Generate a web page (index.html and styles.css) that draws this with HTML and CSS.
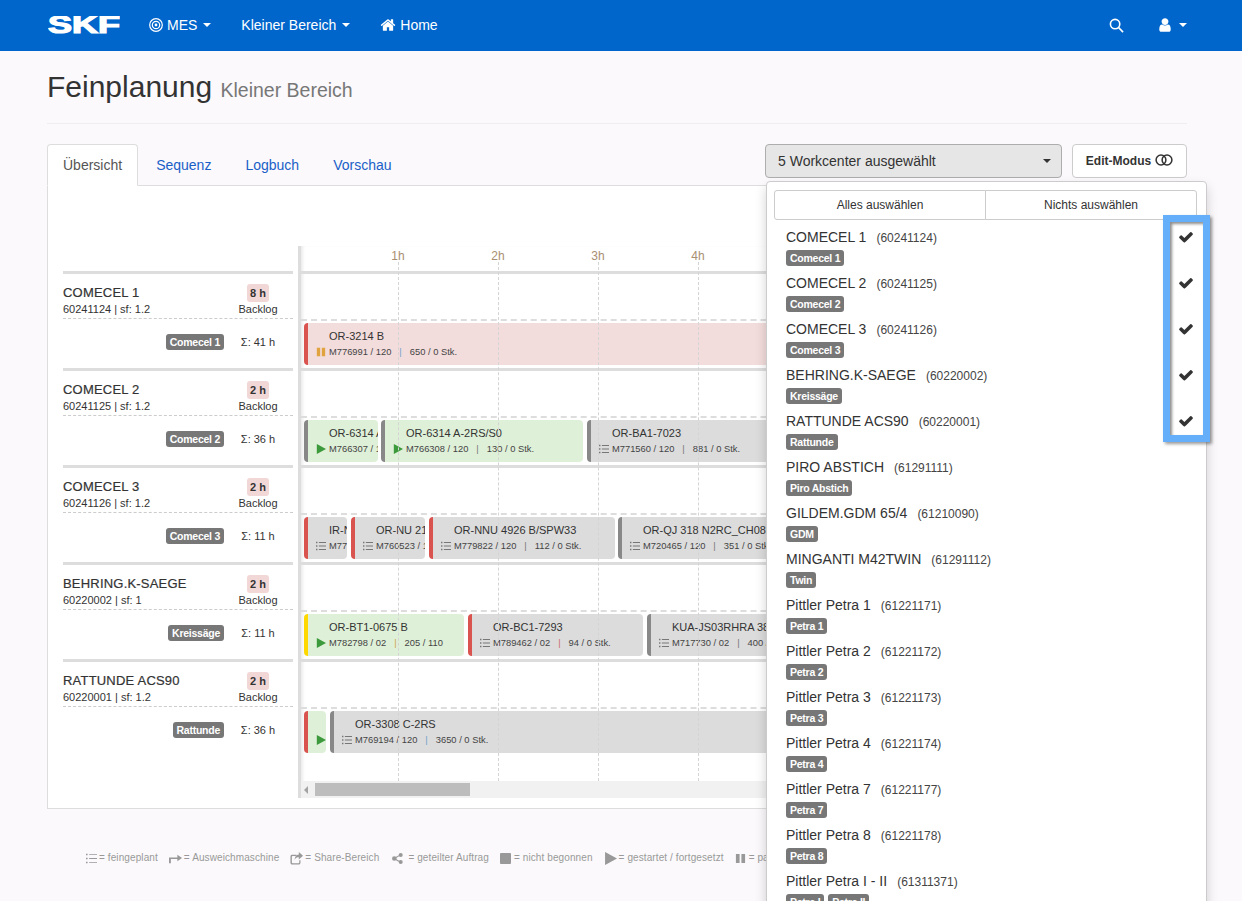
FILE: index.html
```html
<!DOCTYPE html>
<html lang="de">
<head>
    <meta charset="UTF-8">
    <meta name="viewport" content="width=device-width, initial-scale=1.0">
    <title>Feinplanung</title>
    <link rel="stylesheet" href="styles.css">
</head>
<body>
    <svg class="sprites" width="0" height="0">
        <symbol id="i-check" viewBox="0 0 1792 1792"><path d="M1671 566q0 40-28 68l-724 724-136 136q-28 28-68 28t-68-28l-136-136-362-362q-28-28-28-68t28-68l136-136q28-28 68-28t68 28l294 295 656-657q28-28 68-28t68 28l136 136q28 28 28 68z"/></symbol>
        <symbol id="i-home" viewBox="0 0 1792 1792"><path d="M1472 992v480q0 26-19 45t-45 19h-384v-384h-256v384h-384q-26 0-45-19t-19-45v-480q0-1 .5-3t.5-3l575-474 575 474q1 2 1 6zm223-69l-62 74q-8 9-21 11h-3q-13 0-21-7l-692-577-692 577q-12 8-24 7-13-2-21-11l-62-74q-8-10-7-23.5t11-21.5l719-599q32-26 76-26t76 26l244 204v-195q0-14 9-23t23-9h192q14 0 23 9t9 23v408l219 182q10 8 11 21.5t-7 23.5z"/></symbol>
        <symbol id="i-user" viewBox="0 0 1792 1792"><path d="M1536 1399q0 109-62.500 187t-150.500 78h-854q-88 0-150.500-78t-62.500-187q0-85 8.500-160.500t31.500-152 58.500-131 94-89 134.500-34.500q131 128 313 128t313-128q76 0 134.500 34.500t94 89 58.500 131 31.500 152 8.500 160.500zm-256-887q0 159-112.500 271.500t-271.500 112.500-271.500-112.500-112.500-271.500 112.500-271.500 271.500-112.500 271.500 112.500 112.500 271.500z"/></symbol>
        <symbol id="i-list" viewBox="0 0 14 12"><path d="M0 0h2v2H0zM0 5h2v2H0zM0 10h2v2H0zM4 .5h10v1.200H4zM4 5.400h10v1.200H4zM4 10.300h10v1.200H4z"/></symbol>
        <symbol id="i-play" viewBox="0 0 12 12"><path d="M1 0l11 6-11 6z"/></symbol>
        <symbol id="i-pause" viewBox="0 0 12 12"><path d="M1 1h4v10H1zM7 1h4v10H7z"/></symbol>
        <symbol id="i-stop" viewBox="0 0 12 12"><path d="M1 0h10a1 1 0 0 1 1 1v10a1 1 0 0 1-1 1H1a1 1 0 0 1-1-1V1a1 1 0 0 1 1-1z"/></symbol>
        <symbol id="i-arrow" viewBox="0 0 14 12"><path d="M0 5h9V2l5 3.500L9 9V6.500H2V11H0z"/></symbol>
        <symbol id="i-share" viewBox="0 0 14 14"><path d="M2 3h5v1.300H2.800a.8.8 0 0 0-.8.8v6.100c0 .5.300.8.800.8h6.400c.5 0 .8-.3.8-.8V9h1.300v2.500c0 1.200-.9 2-2 2H2.500c-1.200 0-2-.8-2-2v-6.500C.5 3.900 1 3 2 3z"/><path d="M9.500 0L14 4 9.500 8V5.700C7.500 5.700 6 6.300 5 8.500 5 5.500 6.500 3 9.500 2.700z"/></symbol>
        <symbol id="i-nodes" viewBox="0 0 12 12"><circle cx="2.500" cy="6" r="2.500"/><circle cx="9.500" cy="2.200" r="2.200"/><circle cx="9.500" cy="9.800" r="2.200"/><path d="M2 5.500l7-4 .6 1-7 4zM2.600 5.500l7 4-.6 1-7-4z"/></symbol>
    </svg>

    <nav class="navbar">
        <svg class="logo" width="72" height="18" viewBox="0 0 72 18"><text x="0" y="17" textLength="72" lengthAdjust="spacingAndGlyphs">SKF</text></svg>
        <a class="nav-link">
            <svg class="target" width="14" height="14" viewBox="0 0 14 14"><circle cx="7" cy="7" r="6.300"/><circle cx="7" cy="7" r="3.700"/><circle cx="7" cy="7" r="1.400"/></svg>
            <span>MES</span>
            <span class="caret"></span>
        </a>
        <a class="nav-link"><span>Kleiner Bereich</span> <span class="caret"></span></a>
        <a class="nav-link"><svg class="ico-16"><use href="#i-home"/></svg> <span>Home</span></a>
        <a class="nav-link nav-search">
            <svg width="15" height="15" viewBox="0 0 16 16" class="search"><circle cx="6.500" cy="6.500" r="5"/><path d="M10.300 10.300l4.700 4.700"/></svg>
        </a>
        <a class="nav-link nav-user"><svg class="ico-16"><use href="#i-user"/></svg> <span class="caret"></span></a>
    </nav>

    <main class="container">
        <h1 class="page-title">Feinplanung <small>Kleiner Bereich</small></h1>

        <div class="tabbar">
            <ul class="tabs">
                <li class="tab active">Übersicht</li>
                <li class="tab">Sequenz</li>
                <li class="tab">Logbuch</li>
                <li class="tab">Vorschau</li>
            </ul>
            <div class="tools">
                <div class="select-wrap">
                    <button class="select-btn" type="button">5 Workcenter ausgewählt <span class="caret"></span></button>
                    <div class="dropdown">
                        <div class="dd-actions">
                            <button type="button">Alles auswählen</button>
                            <button type="button">Nichts auswählen</button>
                        </div>
                        <ul class="dd-list">
                            <li><div><span class="dd-name">COMECEL 1</span><span class="dd-no">(60241124)</span></div><span class="chip">Comecel 1</span><svg class="dd-check"><use href="#i-check"/></svg></li>
                            <li><div><span class="dd-name">COMECEL 2</span><span class="dd-no">(60241125)</span></div><span class="chip">Comecel 2</span><svg class="dd-check"><use href="#i-check"/></svg></li>
                            <li><div><span class="dd-name">COMECEL 3</span><span class="dd-no">(60241126)</span></div><span class="chip">Comecel 3</span><svg class="dd-check"><use href="#i-check"/></svg></li>
                            <li><div><span class="dd-name">BEHRING.K-SAEGE</span><span class="dd-no">(60220002)</span></div><span class="chip">Kreissäge</span><svg class="dd-check"><use href="#i-check"/></svg></li>
                            <li><div><span class="dd-name">RATTUNDE ACS90</span><span class="dd-no">(60220001)</span></div><span class="chip">Rattunde</span><svg class="dd-check"><use href="#i-check"/></svg></li>
                            <li><div><span class="dd-name">PIRO ABSTICH</span><span class="dd-no">(61291111)</span></div><span class="chip">Piro Abstich</span></li>
                            <li><div><span class="dd-name">GILDEM.GDM 65/4</span><span class="dd-no">(61210090)</span></div><span class="chip">GDM</span></li>
                            <li><div><span class="dd-name">MINGANTI M42TWIN</span><span class="dd-no">(61291112)</span></div><span class="chip">Twin</span></li>
                            <li><div><span class="dd-name">Pittler Petra 1</span><span class="dd-no">(61221171)</span></div><span class="chip">Petra 1</span></li>
                            <li><div><span class="dd-name">Pittler Petra 2</span><span class="dd-no">(61221172)</span></div><span class="chip">Petra 2</span></li>
                            <li><div><span class="dd-name">Pittler Petra 3</span><span class="dd-no">(61221173)</span></div><span class="chip">Petra 3</span></li>
                            <li><div><span class="dd-name">Pittler Petra 4</span><span class="dd-no">(61221174)</span></div><span class="chip">Petra 4</span></li>
                            <li><div><span class="dd-name">Pittler Petra 7</span><span class="dd-no">(61221177)</span></div><span class="chip">Petra 7</span></li>
                            <li><div><span class="dd-name">Pittler Petra 8</span><span class="dd-no">(61221178)</span></div><span class="chip">Petra 8</span></li>
                            <li><div><span class="dd-name">Pittler Petra I - II</span><span class="dd-no">(61311371)</span></div><span class="chip">Petra I</span> <span class="chip">Petra II</span></li>
                        </ul>
                        <div class="highlight"></div>
                    </div>
                </div>
                <button class="edit-btn" type="button">Edit-Modus
                    <svg class="toggle" width="18" height="12" viewBox="0 0 18 12"><circle cx="6" cy="6" r="4.900"/><circle cx="12" cy="6" r="4.900"/></svg>
                </button>
            </div>
        </div>

        <section class="panel">
            <div class="plan">
                <div class="wc-col">
                    <div class="wc-row">
                        <div class="wc-head">
                            <div><div class="wc-name">COMECEL 1</div><div class="wc-sub">60241124 | sf: 1.2</div></div>
                            <div class="wc-side"><span class="backlog">8 h</span><div>Backlog</div></div>
                        </div>
                        <div class="wc-lane"><span class="chip">Comecel 1</span><span class="wc-side">Σ: 41 h</span></div>
                    </div>
                    <div class="wc-row">
                        <div class="wc-head">
                            <div><div class="wc-name">COMECEL 2</div><div class="wc-sub">60241125 | sf: 1.2</div></div>
                            <div class="wc-side"><span class="backlog">2 h</span><div>Backlog</div></div>
                        </div>
                        <div class="wc-lane"><span class="chip">Comecel 2</span><span class="wc-side">Σ: 36 h</span></div>
                    </div>
                    <div class="wc-row">
                        <div class="wc-head">
                            <div><div class="wc-name">COMECEL 3</div><div class="wc-sub">60241126 | sf: 1.2</div></div>
                            <div class="wc-side"><span class="backlog">2 h</span><div>Backlog</div></div>
                        </div>
                        <div class="wc-lane"><span class="chip">Comecel 3</span><span class="wc-side">Σ: 11 h</span></div>
                    </div>
                    <div class="wc-row">
                        <div class="wc-head">
                            <div><div class="wc-name">BEHRING.K-SAEGE</div><div class="wc-sub">60220002 | sf: 1</div></div>
                            <div class="wc-side"><span class="backlog">2 h</span><div>Backlog</div></div>
                        </div>
                        <div class="wc-lane"><span class="chip">Kreissäge</span><span class="wc-side">Σ: 11 h</span></div>
                    </div>
                    <div class="wc-row">
                        <div class="wc-head">
                            <div><div class="wc-name">RATTUNDE ACS90</div><div class="wc-sub">60220001 | sf: 1.2</div></div>
                            <div class="wc-side"><span class="backlog">2 h</span><div>Backlog</div></div>
                        </div>
                        <div class="wc-lane"><span class="chip">Rattunde</span><span class="wc-side">Σ: 36 h</span></div>
                    </div>
                </div>

                <div class="gantt">
                    <div class="gantt-scroll">
                        <div class="hours">
                            <span class="hour" style="left:100px">1h</span>
                            <span class="hour" style="left:200px">2h</span>
                            <span class="hour" style="left:300px">3h</span>
                            <span class="hour" style="left:400px">4h</span>
                        </div>

                        <div class="g-row">
                            <div class="g-lane">
                                <div class="bar bar-pink edge-red" style="left:6px;width:900px">
                                    <div class="bar-title">OR-3214 B</div>
                                    <div class="bar-sub"><svg class="bar-ico c-orange"><use href="#i-pause"/></svg>M776991 / 120<i class="sep-blue">|</i>650 / 0 Stk.</div>
                                </div>
                            </div>
                        </div>
                        <div class="g-row">
                            <div class="g-lane">
                                <div class="bar bar-green edge-gray" style="left:6px;width:74px">
                                    <div class="bar-title">OR-6314 A-2RS/S0</div>
                                    <div class="bar-sub"><svg class="bar-ico c-green"><use href="#i-play"/></svg>M766307 / 120</div>
                                </div>
                                <div class="bar bar-green edge-gray" style="left:83px;width:202px">
                                    <div class="bar-title">OR-6314 A-2RS/S0</div>
                                    <div class="bar-sub"><svg class="bar-ico c-green"><use href="#i-play"/></svg>M766308 / 120<i>|</i>130 / 0 Stk.</div>
                                </div>
                                <div class="bar bar-gray edge-gray" style="left:289px;width:600px">
                                    <div class="bar-title">OR-BA1-7023</div>
                                    <div class="bar-sub"><svg class="bar-ico c-list"><use href="#i-list"/></svg>M771560 / 120<i>|</i>881 / 0 Stk.</div>
                                </div>
                            </div>
                        </div>
                        <div class="g-row">
                            <div class="g-lane">
                                <div class="bar bar-gray edge-red" style="left:6px;width:43px">
                                    <div class="bar-title">IR-NU 2108</div>
                                    <div class="bar-sub"><svg class="bar-ico c-list"><use href="#i-list"/></svg>M775120 / 120</div>
                                </div>
                                <div class="bar bar-gray edge-red" style="left:53px;width:74px">
                                    <div class="bar-title">OR-NU 2108</div>
                                    <div class="bar-sub"><svg class="bar-ico c-list"><use href="#i-list"/></svg>M760523 / 120</div>
                                </div>
                                <div class="bar bar-gray edge-red" style="left:131px;width:186px">
                                    <div class="bar-title">OR-NNU 4926 B/SPW33</div>
                                    <div class="bar-sub"><svg class="bar-ico c-list"><use href="#i-list"/></svg>M779822 / 120<i>|</i>112 / 0 Stk.</div>
                                </div>
                                <div class="bar bar-gray edge-gray" style="left:320px;width:600px">
                                    <div class="bar-title">OR-QJ 318 N2RC_CH08</div>
                                    <div class="bar-sub"><svg class="bar-ico c-list"><use href="#i-list"/></svg>M720465 / 120<i>|</i>351 / 0 Stk.</div>
                                </div>
                            </div>
                        </div>
                        <div class="g-row">
                            <div class="g-lane">
                                <div class="bar bar-green edge-yellow" style="left:6px;width:160px">
                                    <div class="bar-title">OR-BT1-0675 B</div>
                                    <div class="bar-sub"><svg class="bar-ico c-green"><use href="#i-play"/></svg>M782798 / 02<i class="sep-orange">|</i>205 / 110</div>
                                </div>
                                <div class="bar bar-gray edge-red" style="left:170px;width:175px">
                                    <div class="bar-title">OR-BC1-7293</div>
                                    <div class="bar-sub"><svg class="bar-ico c-list"><use href="#i-list"/></svg>M789462 / 02<i class="sep-red">|</i>94 / 0 Stk.</div>
                                </div>
                                <div class="bar bar-gray edge-gray" style="left:349px;width:600px">
                                    <div class="bar-title">KUA-JS03RHRA 38</div>
                                    <div class="bar-sub"><svg class="bar-ico c-list"><use href="#i-list"/></svg>M717730 / 02<i>|</i>400 / 0 Stk.</div>
                                </div>
                            </div>
                        </div>
                        <div class="g-row">
                            <div class="g-lane">
                                <div class="bar bar-green edge-red" style="left:6px;width:22px">
                                    <div class="bar-sub bar-sub-only"><svg class="bar-ico c-green"><use href="#i-play"/></svg></div>
                                </div>
                                <div class="bar bar-gray edge-gray" style="left:32px;width:800px">
                                    <div class="bar-title">OR-3308 C-2RS</div>
                                    <div class="bar-sub"><svg class="bar-ico c-list"><use href="#i-list"/></svg>M769194 / 120<i class="sep-blue">|</i>3650 / 0 Stk.</div>
                                </div>
                            </div>
                        </div>

                        <span class="vline" style="left:100px"></span>
                        <span class="vline" style="left:200px"></span>
                        <span class="vline" style="left:300px"></span>
                        <span class="vline" style="left:400px"></span>
                    </div>
                    <div class="scrollbar">
                        <span class="sb-arrow"></span>
                        <span class="sb-thumb"></span>
                    </div>
                </div>
            </div>
        </section>

        <ul class="legend">
            <li><svg class="lg-ico lg-list"><use href="#i-list"/></svg>= feingeplant</li>
            <li><svg class="lg-ico"><use href="#i-arrow"/></svg>= Ausweichmaschine</li>
            <li class="lg-wide"><svg class="lg-ico"><use href="#i-share"/></svg>= Share-Bereich</li>
            <li><svg class="lg-ico lg-nodes"><use href="#i-nodes"/></svg>= geteilter Auftrag</li>
            <li><svg class="lg-ico lg-small"><use href="#i-stop"/></svg>= nicht begonnen</li>
            <li><svg class="lg-ico"><use href="#i-play"/></svg>= gestartet / fortgesetzt</li>
            <li><svg class="lg-ico lg-small"><use href="#i-pause"/></svg>= pausiert</li>
        </ul>
    </main>
</body>
</html>
```

FILE: styles.css
```css
* {
    box-sizing: border-box;
}

html, body {
    height: 100%;
}

body {
    margin: 0;
    height: 901px;
    overflow: hidden;
    background-color: #fbf9fb;
    color: #333;
    font-family: "Liberation Sans", Arial, sans-serif;
    font-size: 14px;
    line-height: 20px;
}

ul {
    margin: 0;
    padding: 0;
    list-style: none;
}

button {
    font-family: inherit;
    cursor: pointer;
}

.sprites {
    position: absolute;
}

/* navbar */
.navbar {
    display: flex;
    align-items: center;
    height: 51px;
    padding-left: 48px;
    padding-right: 55px;
    background-color: #0066cc;
    color: #fff;
}

.logo {
    margin-right: 14px;
    margin-top: -1px;
}

.logo text {
    font-family: "Liberation Sans", Arial, sans-serif;
    font-size: 23px;
    font-weight: bold;
    fill: #fff;
    stroke: #fff;
    stroke-width: 1.200px;
    stroke-linejoin: miter;
}

.nav-link {
    display: flex;
    align-items: center;
    gap: 4px;
    padding: 0 15px;
    margin-top: -1px;
}

.nav-search {
    margin-left: auto;
    padding-right: 16px;
}

.nav-user {
    padding-right: 0;
    padding-left: 17px;
}

.nav-link .caret {
    margin-left: 2px;
}

.target circle {
    fill: none;
    stroke: #fff;
    stroke-width: 1.200;
}

.target circle:last-child {
    fill: #fff;
    stroke: none;
}

.search {
    fill: none;
    stroke: #fff;
    stroke-width: 1.700;
}

.ico-16 {
    width: 16px;
    height: 16px;
    fill: #fff;
}

.caret {
    display: inline-block;
    width: 0;
    height: 0;
    border-top: 4px solid currentColor;
    border-left: 4px solid transparent;
    border-right: 4px solid transparent;
}

/* page */
.container {
    padding: 0 55px 0 47px;
}

.page-title {
    margin: 19px 0 0;
    padding-bottom: 16px;
    border-bottom: 1px solid #eee;
    font-size: 30px;
    font-weight: normal;
    line-height: 33px;
    color: #333;
}

.page-title small {
    font-size: 19.500px;
    color: #777;
}

/* tabs */
.tabbar {
    display: flex;
    justify-content: space-between;
    height: 62px;
    padding-top: 20px;
}

.tabs {
    display: flex;
    position: relative;
    z-index: 1;
}

.tab {
    height: 42px;
    padding: 10px 15px;
    margin-right: 2px;
    border: 1px solid transparent;
    color: #1a5fc8;
}

.tab.active {
    border-color: #ddd #ddd #fff;
    border-radius: 4px 4px 0 0;
    background-color: #fff;
    color: #555;
}

.tools {
    display: flex;
    gap: 10px;
    position: relative;
    z-index: 2;
}

.select-wrap {
    position: relative;
}

.select-btn {
    display: flex;
    justify-content: space-between;
    align-items: center;
    width: 297px;
    height: 34px;
    padding: 0 10px 0 12px;
    border: 1px solid #adadad;
    border-radius: 4px;
    background-color: #e6e6e6;
    color: #333;
    font-size: 14px;
}

.edit-btn {
    display: flex;
    align-items: center;
    justify-content: center;
    gap: 4px;
    width: 115px;
    height: 34px;
    padding: 0;
    border: 1px solid #ccc;
    border-radius: 4px;
    background-color: #fff;
    color: #333;
    font-size: 12px;
    font-weight: bold;
}

.toggle {
    margin-top: -3px;
    fill: none;
    stroke: #333;
    stroke-width: 1.500;
}

/* workcenter dropdown */
.dropdown {
    position: absolute;
    top: 37px;
    left: 1px;
    width: 441px;
    height: 760px;
    padding: 8px 0 0;
    border: 1px solid #ccc;
    border-radius: 4px;
    background-color: #fff;
    box-shadow: 0 6px 12px rgba(0, 0, 0, .175);
}

.dd-actions {
    display: flex;
    margin: 0 9px 0 7px;
}

.dd-actions button {
    flex: 1;
    height: 30px;
    padding: 0;
    border: 1px solid #ccc;
    background-color: #fff;
    color: #333;
    font-size: 12px;
}

.dd-actions button:first-child {
    border-radius: 3px 0 0 3px;
}

.dd-actions button:last-child {
    margin-left: -1px;
    border-radius: 0 3px 3px 0;
}

.dd-list {
    margin-top: 7px;
}

.dd-list li {
    position: relative;
    height: 46px;
    padding-left: 19px;
}

.dd-list li > div {
    height: 23px;
}

.dd-name {
    color: #333;
    font-size: 14px;
}

.dd-no {
    margin-left: 10px;
    font-size: 12px;
    color: #444;
}

.dd-check {
    position: absolute;
    top: 2px;
    right: 12px;
    width: 16px;
    height: 16px;
    fill: #333;
}

.highlight {
    position: absolute;
    top: 33px;
    left: 396px;
    width: 47px;
    height: 227px;
    border: 7px solid #64aefa;
    box-shadow: 2px 2px 3px rgba(0, 0, 0, .4), inset 2px 2px 3px rgba(0, 0, 0, .45);
}

.chip {
    display: inline-block;
    height: 16px;
    padding: 0 4px;
    border-radius: 3px;
    background-color: #777;
    color: #fff;
    font-size: 10.500px;
    font-weight: bold;
    line-height: 16px;
    letter-spacing: -.25px;
    vertical-align: top;
}

/* plan panel */
.panel {
    margin-top: -1px;
    height: 624px;
    padding: 60px 0 0 15px;
    border: 1px solid #ddd;
    background-color: #fff;
}

.plan {
    display: flex;
}

.wc-col {
    width: 230px;
    padding-top: 25px;
    margin-right: 5px;
}

.wc-row {
    height: 97px;
    border-top: 3px solid #ddd;
}

.wc-head {
    display: flex;
    justify-content: space-between;
    height: 45px;
    padding-top: 10px;
    border-bottom: 1px dashed #ccc;
}

.wc-name {
    font-size: 13px;
    line-height: 18px;
    letter-spacing: .2px;
    color: #333;
    -webkit-text-stroke: .2px #333;
}

.wc-sub {
    font-size: 11px;
    line-height: 15px;
}

.wc-side {
    width: 70px;
    text-align: center;
    font-size: 11px;
    line-height: 15px;
}

.wc-lane .wc-side {
    padding-top: 2px;
}

.wc-lane .chip {
    margin-right: -1px;
}

.backlog {
    display: inline-block;
    height: 18px;
    padding: 0 3px;
    width: 22px;
    border-radius: 3px;
    background-color: #f2d7d7;
    font-weight: bold;
    line-height: 18px;
    white-space: nowrap;
}

.wc-lane {
    display: flex;
    justify-content: flex-end;
    align-items: center;
    height: 45px;
}

/* gantt */
.gantt {
    flex: 1;
    min-width: 0;
    position: relative;
    border-left: 3px solid #ddd;
    box-shadow: inset 3px 0 3px -1px rgba(0, 0, 0, .08);
    margin-left: 0;
}

.gantt-scroll {
    position: relative;
    height: 535px;
    overflow: hidden;
}

.hours {
    position: relative;
    height: 25px;
}

.hour {
    position: absolute;
    top: 1px;
    width: 40px;
    margin-left: -23px;
    text-align: center;
    font-size: 12px;
    line-height: 18px;
    color: #a88e72;
}

.vline {
    position: absolute;
    top: 16px;
    bottom: 0;
    margin-left: -3px;
    border-left: 1px dashed #d4d4d4;
}

.g-row {
    height: 97px;
    padding-top: 45px;
    border-top: 3px solid #ddd;
}

.g-lane {
    position: relative;
    height: 49px;
    border-top: 2px dashed #ddd;
}

.bar {
    position: absolute;
    top: 2px;
    height: 42px;
    margin-left: -3px;
    border-left: 4px solid #888;
    border-radius: 4px;
    overflow: hidden;
    white-space: nowrap;
    color: #333;
}

.bar-pink { background-color: #f3dcdc; }
.bar-green { background-color: #dff0d8; }
.bar-gray { background-color: #dcdcdc; }

.edge-red { border-left-color: #d9534f; }
.edge-gray { border-left-color: #888; }
.edge-yellow { border-left-color: #ffd800; }

.bar-title {
    padding: 6px 0 0 21px;
    font-size: 11px;
    line-height: 15px;
}

.bar-sub {
    display: flex;
    align-items: center;
    height: 16px;
    padding-left: 8px;
    font-size: 9.350px;
    color: #444;
}

.bar-sub i {
    margin: 0 8px;
    font-style: normal;
    color: #777;
}

.bar-sub i.sep-blue {
    color: #6f9fcc;
}

.bar-sub i.sep-orange {
    color: #d0a050;
}

.bar-sub i.sep-red {
    color: #c96b6b;
}

.bar-sub-only {
    margin-top: 21px;
}

.bar-ico {
    flex: none;
    width: 10px;
    height: 10px;
    margin-right: 3px;
}

.c-orange { fill: #e0a33e; }
.c-green { fill: #3c9a3c; }
.c-list { fill: #777; }

.scrollbar {
    position: relative;
    height: 17px;
    background-color: #f1f1f1;
}

.sb-arrow {
    position: absolute;
    top: 5px;
    left: 3px;
    border-top: 4px solid transparent;
    border-bottom: 4px solid transparent;
    border-right: 4px solid #a3a3a3;
}

.sb-thumb {
    position: absolute;
    top: 2px;
    left: 14px;
    width: 155px;
    height: 13px;
    background-color: #bdbdbd;
}

/* legend */
.legend {
    display: flex;
    gap: 11px;
    margin-top: 39px;
    padding-left: 39px;
    font-size: 10px;
    letter-spacing: .1px;
    color: #999;
    white-space: nowrap;
}

.legend li {
    display: flex;
    align-items: center;
}

.legend li.lg-wide {
    margin-right: 2px;
}

.lg-ico {
    width: 13px;
    height: 13px;
    margin-right: 2px;
    fill: #999;
}

.lg-list {
    width: 11px;
}

.lg-small {
    width: 11px;
    margin-right: 3px;
}

.lg-nodes {
    width: 11px;
    margin-right: 5px;
}
```
